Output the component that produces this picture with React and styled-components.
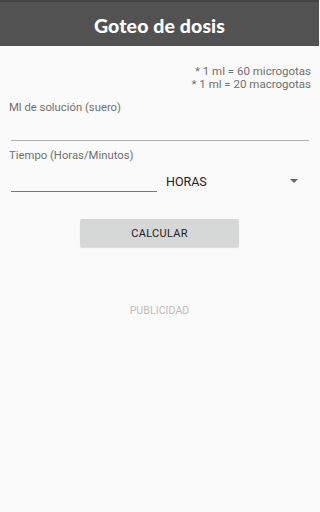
import React from "react";
import styled, { createGlobalStyle } from "styled-components";

const Global = createGlobalStyle`
  html, body { margin: 0; padding: 0; background: #fafafa; }
  body { font-family: Roboto, "Liberation Sans", sans-serif; }
`;

const Page = styled.div`
  width: 319px;
  height: 512px;
  background: #fafafa;
  display: flex;
  flex-direction: column;
`;

const Header = styled.header`
  height: 46px;
  background: #525252;
  border-top: 2px solid #444;
  box-sizing: border-box;
  display: flex;
  align-items: center;
  justify-content: center;
`;

const Title = styled.h1`
  margin: 0;
  font-family: Lato, "Open Sans", sans-serif;
  font-weight: 900;
  font-size: 19.5px;
  color: #fff;
  letter-spacing: 0.1px;
  transform: translateY(1px);
`;

const Notes = styled.div`
  padding: 19px 8px 0 0;
  display: flex;
  flex-direction: column;
  align-items: flex-end;
  font-size: 11.5px;
  line-height: 12.5px;
  color: #707070;
`;

const Form = styled.div`
  padding: 11px 10px 0 9px;
  display: flex;
  flex-direction: column;
`;

const Label = styled.div`
  font-size: 11.3px;
  line-height: 14px;
  color: #707070;
  margin-top: ${(p) => p.$mt || 0}px;
`;

const Field = styled.div`
  height: ${(p) => p.$h}px;
  width: ${(p) => (p.$w ? `${p.$w}px` : "auto")};
  margin-left: 2px;
  border-bottom: 1px solid ${(p) => p.$c};
  box-sizing: border-box;
`;

const Row = styled.div`
  display: flex;
  align-items: flex-end;
`;

const Select = styled.div`
  flex: 1;
  display: flex;
  align-items: center;
  justify-content: space-between;
  padding: 0 11px 0 9px;
  height: 24px;
  margin-bottom: -1px;
  font-size: 12.5px;
  color: #222;
`;

const Arrow = styled.span`
  width: 0;
  height: 0;
  border-left: 4px solid transparent;
  border-right: 4px solid transparent;
  border-top: 4px solid #666;
`;

const ButtonWrap = styled.div`
  display: flex;
  justify-content: center;
  padding-top: 27px;
`;

const Button = styled.button`
  width: 159px;
  height: 28px;
  border: none;
  border-radius: 2px;
  background: #d6d7d7;
  box-shadow: 0 1px 1px rgba(0,0,0,0.12);
  font-family: Roboto, "Liberation Sans", sans-serif;
  font-weight: 400;
  font-size: 11px;
  letter-spacing: 0.3px;
  color: #222;
  padding: 0;
`;

const Ad = styled.div`
  text-align: center;
  padding-top: 57px;
  font-size: 10.5px;
  color: #bdbdbd;
  letter-spacing: 0.1px;
`;

export default function App() {
  return (
    <Page>
      <Global />
      <Header>
        <Title>Goteo de dosis</Title>
      </Header>
      <Notes>
        <span>* 1 ml = 60 microgotas</span>
        <span>* 1 ml = 20 macrogotas</span>
      </Notes>
      <Form>
        <Label>Ml de solución (suero)</Label>
        <Field $h={26} $c="#b0b0b0" />
        <Label $mt={8}>Tiempo (Horas/Minutos)</Label>
        <Row>
          <Field $h={29} $w={146} $c="#757575" />
          <Select>
            <span>HORAS</span>
            <Arrow />
          </Select>
        </Row>
      </Form>
      <ButtonWrap>
        <Button>CALCULAR</Button>
      </ButtonWrap>
      <Ad>PUBLICIDAD</Ad>
    </Page>
  );
}
